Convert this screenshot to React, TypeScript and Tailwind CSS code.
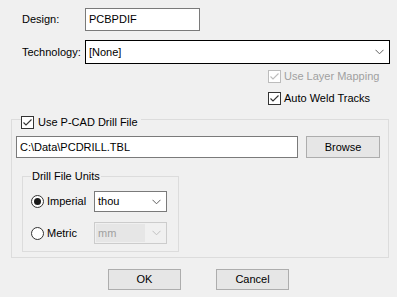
import React from "react";

const Check = ({ disabled = false }: { disabled?: boolean }) => (
  <div
    className={`w-[13px] h-[13px] border bg-white flex items-center justify-center ${
      disabled ? "border-[#bcbcbc]" : "border-[#333333]"
    }`}
  >
    <svg width="11" height="11" viewBox="0 0 11 11">
      <path
        d="M1.5 5.5 L4 8 L9.5 2.5"
        fill="none"
        stroke={disabled ? "#bcbcbc" : "#333333"}
        strokeWidth="1.1"
      />
    </svg>
  </div>
);

const Radio = ({ on }: { on: boolean }) => (
  <div className="w-[13px] h-[13px] rounded-full border border-[#333333] bg-white flex items-center justify-center">
    {on && <div className="w-[7px] h-[7px] rounded-full bg-[#1a1a1a]" />}
  </div>
);

const Chevron = ({ color = "#606060" }: { color?: string }) => (
  <svg width="9" height="6" viewBox="0 0 9 6">
    <path d="M0.5 0.8 L4.5 4.8 L8.5 0.8" fill="none" stroke={color} strokeWidth="1" />
  </svg>
);

export default function App() {
  return (
    <div
      className="w-[397px] h-[297px] bg-[#f0f0f0] text-[11px] text-black leading-none overflow-hidden"
      style={{ fontFamily: '"Liberation Sans", Arial, sans-serif' }}
    >
      {/* Design */}
      <div className="flex items-center pt-[8px]">
        <div className="w-[85px] pl-[22px]">Design:</div>
        <div className="w-[115px] h-[23px] bg-white border border-[#7a7a7a] flex items-center pl-[3px]">
          PCBPDIF
        </div>
      </div>

      {/* Technology */}
      <div className="flex items-center mt-[9px]">
        <div className="w-[85px] pl-[22px]">Technology:</div>
        <div className="w-[305px] h-[24px] bg-white border border-black flex items-center pl-[3px] pr-[5px] justify-between">
          <span>[None]</span>
          <Chevron />
        </div>
      </div>

      {/* Checkboxes */}
      <div className="flex items-center mt-[6px] pl-[268px] gap-[3px] text-[#a0a0a0]">
        <Check disabled />
        <span>Use Layer Mapping</span>
      </div>
      <div className="flex items-center mt-[9px] pl-[268px] gap-[3px]">
        <Check />
        <span>Auto Weld Tracks</span>
      </div>

      {/* Group box */}
      <div className="relative mt-[14px] ml-[11px] w-[378px] h-[139px] border border-[#dcdcdc]">
        <div className="absolute left-[9px] top-[-4px] flex items-center gap-[4px] bg-[#f0f0f0] pr-[3px]">
          <Check />
          <span>Use P-CAD Drill File</span>
        </div>

        <div className="flex items-center mt-[16px] ml-[4px] gap-[8px]">
          <div className="w-[282px] h-[22px] bg-white border border-[#7a7a7a] flex items-center pl-[3px]">
            C:\Data\PCDRILL.TBL
          </div>
          <div className="w-[74px] h-[22px] bg-[#e6e6e6] border border-[#adadad] flex items-center justify-center">
            Browse
          </div>
        </div>

        {/* Inner group */}
        <div className="relative mt-[18px] ml-[10px] w-[157px] h-[76px] border border-[#dcdcdc]">
          <div className="absolute left-[8px] top-[-6px] bg-[#f0f0f0] px-[1px]">Drill File Units</div>

          <div className="flex items-center mt-[14px] ml-[8px]">
            <Radio on />
            <span className="ml-[3px] w-[47px]">Imperial</span>
            <div className="w-[73px] h-[21px] bg-white border border-[#7a7a7a] flex items-center justify-between pl-[3px] pr-[5px]">
              <span>thou</span>
              <Chevron />
            </div>
          </div>

          <div className="flex items-center mt-[10px] ml-[8px]">
            <Radio on={false} />
            <span className="ml-[3px] w-[47px]">Metric</span>
            <div className="w-[73px] h-[22px] bg-[#f0f0f0] border border-[#cccccc] flex items-center justify-between p-[1px] pr-[5px]">
              <div className="h-full w-[49px] bg-[#e6e6e6] flex items-center pl-[2px] text-[#a0a0a0]">mm</div>
              <Chevron color="#c0c0c0" />
            </div>
          </div>
        </div>
      </div>

      {/* Buttons */}
      <div className="flex mt-[11px] ml-[108px] gap-[35px]">
        <div className="w-[73px] h-[21px] bg-[#e6e6e6] border border-[#adadad] flex items-center justify-center">
          OK
        </div>
        <div className="w-[73px] h-[21px] bg-[#e6e6e6] border border-[#adadad] flex items-center justify-center">
          Cancel
        </div>
      </div>
    </div>
  );
}
